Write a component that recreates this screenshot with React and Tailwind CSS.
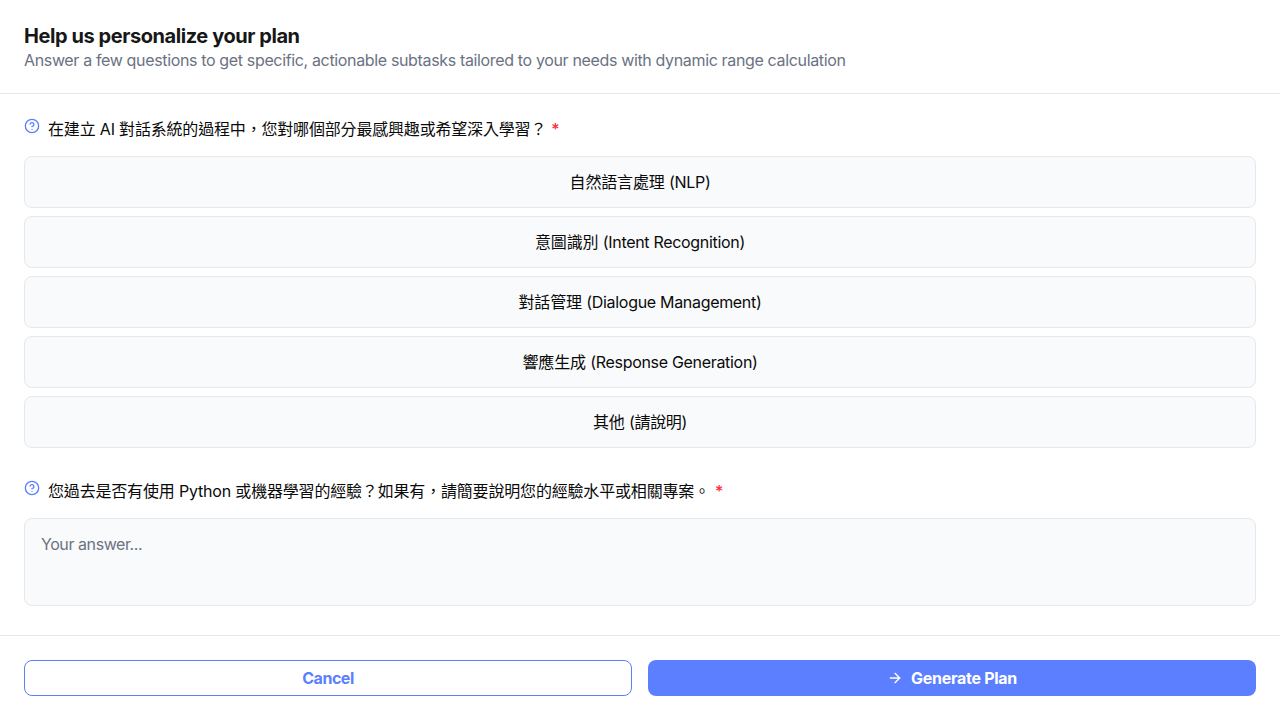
import React from "react";
import { CircleQuestionMark, ArrowRight } from "lucide-react";

const options = [
  ["自然語言處理", "(NLP)"],
  ["意圖識別", "(Intent Recognition)"],
  ["對話管理", "(Dialogue Management)"],
  ["響應生成", "(Response Generation)"],
  ["其他", "(請說明)"],
];

function Question({ children }) {
  return (
    <div className="flex items-start gap-2">
      <CircleQuestionMark className="size-4 shrink-0 text-[#5b7fff]" />
      <h3 className="-mt-px mb-px text-base tracking-[-0.18px]">
        {children}
        <span className="ml-[5px] font-medium text-[#fb2c36]">*</span>
      </h3>
    </div>
  );
}

export default function App() {
  return (
    <div className="flex h-screen flex-col bg-white font-['Inter','Noto_Sans_CJK_TC',sans-serif] text-[#0a0a0a]">
      <header className="h-[94px] border-b border-gray-200 px-6 pt-6">
        <h2 className="text-xl leading-6 font-bold tracking-[-0.43px] text-[#171717]">Help us personalize your plan</h2>
        <p className="text-base tracking-[-0.35px] text-gray-500">
          Answer a few questions to get specific, actionable subtasks tailored to your needs with dynamic range calculation
        </p>
      </header>
      <main className="flex-1 px-6 pt-6">
        <Question>在建立 AI 對話系統的過程中，您對哪個部分最感興趣或希望深入學習？</Question>
        <div className="mt-3.5 flex flex-col gap-2">
          {options.map(([topic, detail]) => (
            <button key={topic} className="h-[52px] rounded-lg border border-gray-200 bg-gray-50 text-base tracking-[-0.15px]">
              {topic} <span className="tracking-[-0.31px]">{detail}</span>
            </button>
          ))}
        </div>
        <div className="mt-8">
          <Question>您過去是否有使用 Python 或機器學習的經驗？如果有，請簡要說明您的經驗水平或相關專案。</Question>
        </div>
        <textarea
          placeholder="Your answer..."
          className="mt-3.5 block h-[88px] w-full resize-none rounded-lg border border-gray-200 bg-gray-50 px-4 py-[13px] text-base tracking-[-0.43px] placeholder:text-gray-500"
        />
      </main>
      <footer className="grid h-[85px] grid-cols-2 gap-4 border-t border-gray-200 px-6 pt-6 text-base font-bold">
        <button className="h-9 rounded-lg border border-[#5b7fff] tracking-[-0.45px] text-[#5b7fff]">Cancel</button>
        <button className="flex h-9 items-center justify-center gap-2 rounded-lg bg-[#5b7fff] tracking-[-0.27px] text-white">
          <ArrowRight className="size-4" />
          Generate Plan
        </button>
      </footer>
    </div>
  );
}
